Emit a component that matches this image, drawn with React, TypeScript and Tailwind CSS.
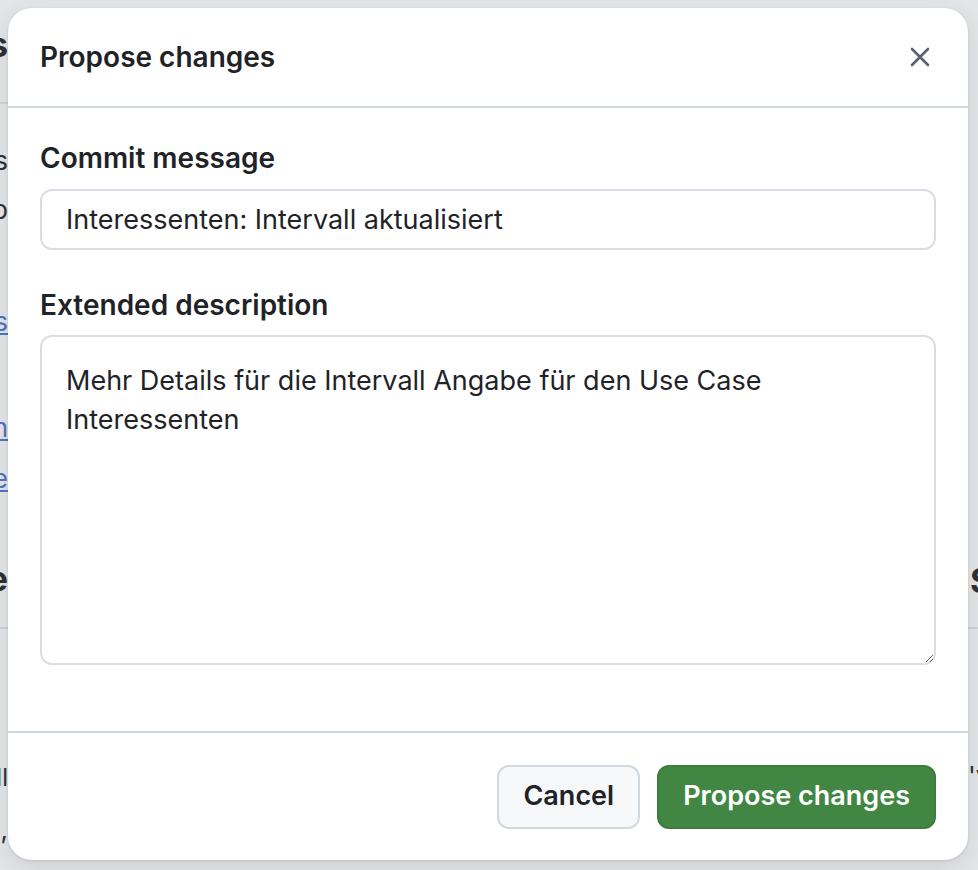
function Gap({ h }: { h: string }) {
  return <div className={`shrink-0 ${h}`} />;
}

function Frag({ h, className = "", children }: { h: string; className?: string; children: React.ReactNode }) {
  return (
    <div className={`flex shrink-0 items-center justify-end whitespace-nowrap ${h} ${className}`}>{children}</div>
  );
}

function Rule() {
  return <div className="h-[2px] w-full shrink-0 bg-[#cfd3d7]" />;
}

function CloseIcon() {
  return (
    <svg width="20" height="20" viewBox="0 0 20 20" fill="none" stroke="currentColor" strokeWidth="2.6" strokeLinecap="round">
      <path d="M2 2 L18 18 M18 2 L2 18" />
    </svg>
  );
}

export default function App() {
  return (
    <div className="relative h-[870px] w-[978px] overflow-hidden bg-[#e4e5e7] font-['Inter','Noto_Sans',sans-serif] text-[#1f2328]">
      {/* dimmed page behind the dialog, only its edges peek out */}
      <div className="flex h-full justify-between">
        <div className="flex w-[8px] flex-col overflow-hidden text-[#2b2f33]">
          <Gap h="h-[25px]" />
          <Frag h="h-[40px] leading-[40px]" className="text-[34px] font-bold">Changes</Frag>
          <Gap h="h-[37px]" />
          <Rule />
          <Gap h="h-[39px]" />
          <Frag h="h-[36px] leading-[36px]" className="text-[26px]">Ändern Sie Details</Frag>
          <Gap h="h-[13px]" />
          <Frag h="h-[36px] leading-[36px]" className="text-[26px]">Vorschau p</Frag>
          <Gap h="h-[76px]" />
          <Frag h="h-[36px] leading-[36px]" className="text-[26px] text-[#4a73c4] underline">Links</Frag>
          <Gap h="h-[70px]" />
          <Frag h="h-[36px] leading-[36px]" className="text-[26px] text-[#4a73c4] underline">Termin</Frag>
          <Gap h="h-[15px]" />
          <Frag h="h-[36px] leading-[36px]" className="text-[26px] text-[#4a73c4] underline">Angabe</Frag>
          <Gap h="h-[62px]" />
          <Frag h="h-[40px] leading-[40px]" className="text-[34px] font-bold">Use Case</Frag>
          <Gap h="h-[28px]" />
          <Rule />
          <Gap h="h-[131px]" />
          <Frag h="h-[36px] leading-[36px]" className="text-[24px]">Intervall</Frag>
          <Gap h="h-[16px]" />
          <Frag h="h-[36px] leading-[36px]" className="text-[26px]">z,</Frag>
        </div>
        <div className="flex w-[10px] flex-col overflow-hidden text-[#2b2f33]">
          <Gap h="h-[561px]" />
          <div className="flex h-[40px] shrink-0 items-center whitespace-nowrap pl-[2px] text-[34px] font-bold leading-[40px]">
            Status
          </div>
          <Gap h="h-[26px]" />
          <Rule />
          <Gap h="h-[129px]" />
          <div className="flex h-[36px] shrink-0 items-center whitespace-nowrap text-[26px] leading-[36px]">'vorher</div>
        </div>
      </div>

      {/* dialog */}
      <div className="absolute left-[8px] top-[8px] flex h-[852px] w-[960px] flex-col rounded-[24px] bg-white shadow-[0_8px_24px_rgba(66,74,83,0.12),0_1px_3px_rgba(31,35,40,0.12)]">
        <div className="flex h-[100px] shrink-0 items-center justify-between border-b-2 border-[#d1d9e0] pl-[32px] pr-[38px]">
          <h2 className="text-[28px] font-semibold">Propose changes</h2>
          <button className="text-[#59636e]" aria-label="Close">
            <CloseIcon />
          </button>
        </div>

        <div className="flex flex-1 flex-col px-[32px] pt-[32px]">
          <label className="text-[28px] font-semibold leading-[36px]">Commit message</label>
          <input
            className="mt-[13px] h-[61px] w-full rounded-[12px] border-2 border-[#d8dee4] px-[24px] text-[27px] text-[#1f2328] outline-none"
            defaultValue="Interessenten: Intervall aktualisiert"
          />
          <label className="mt-[37px] text-[28px] font-semibold leading-[36px]">Extended description</label>
          <textarea
            className="mt-[12px] h-[330px] w-full resize-y rounded-[12px] border-2 border-[#d8dee4] px-[24px] pt-[24px] text-[27px] leading-[39px] text-[#1f2328] outline-none"
            defaultValue="Mehr Details für die Intervall Angabe für den Use Case Interessenten"
          />
        </div>

        <div className="flex h-[129px] shrink-0 items-center justify-end gap-[17px] border-t-2 border-[#d1d9e0] px-[32px]">
          <button className="h-[64px] rounded-[12px] border-2 border-[#d1d9e0] bg-[#f6f8fa] px-[24px] text-[27px] font-semibold">
            Cancel
          </button>
          <button className="h-[64px] rounded-[12px] border-2 border-[#3c7d3d] bg-[#418743] px-[24px] text-[27px] font-semibold text-white">
            Propose changes
          </button>
        </div>
      </div>
    </div>
  );
}
